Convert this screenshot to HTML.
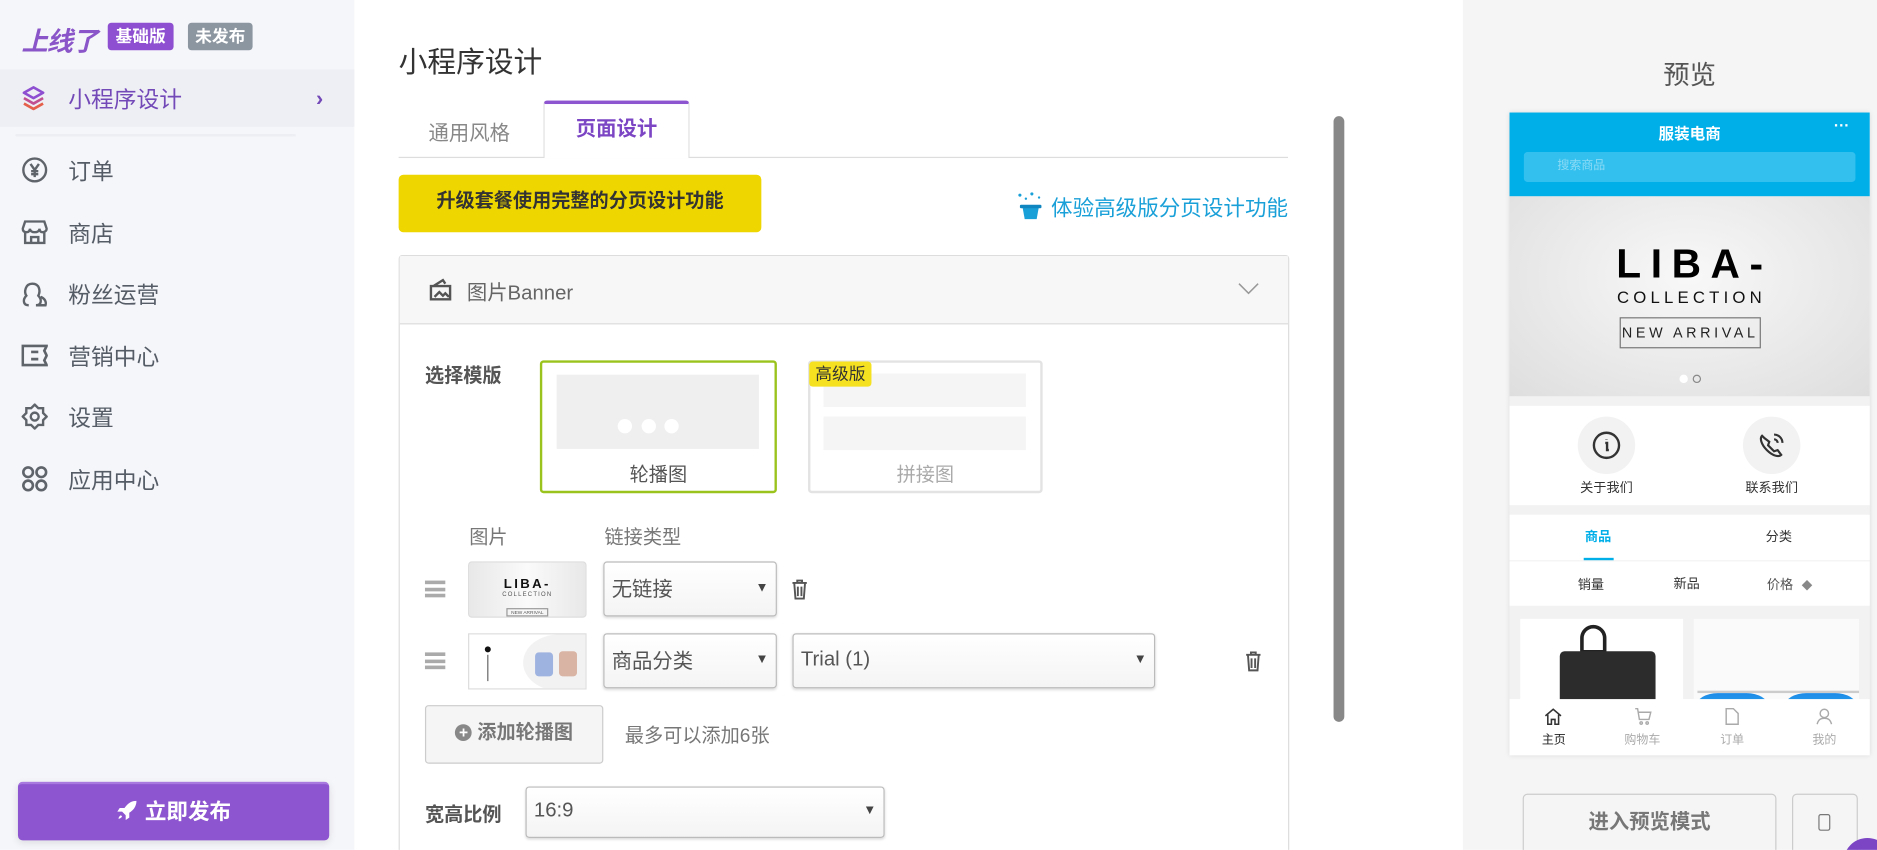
<!DOCTYPE html>
<html><head><meta charset="utf-8"><style>
*{box-sizing:border-box;margin:0;padding:0}
html,body{width:1877px;height:850px;overflow:hidden;background:#fff}
body{font-family:"Liberation Sans","Noto Sans CJK SC",sans-serif}
#w{position:absolute;left:0;top:0;width:1568px;height:710px;transform:scale(1.19707);transform-origin:0 0;overflow:hidden}
.a{position:absolute}
.side{left:0;top:0;width:296px;height:710px;background:#f5f6fa}
.item{position:absolute;left:0;width:296px;height:40px;display:flex;align-items:center;font-size:19px;color:#555c66}
.item svg{position:absolute;left:18px}
.item span{position:absolute;left:57px}
.sel{position:absolute;height:46px;border:1px solid #bbb;border-radius:3px;background:linear-gradient(#fff,#f4f4f4);box-shadow:0 1px 2px rgba(0,0,0,.15);font-size:17px;color:#555;padding-left:6px;display:flex;align-items:center;padding-bottom:3px}
.sel:after{content:"▼";position:absolute;right:6px;font-size:11px;color:#444}
.c{text-align:center}
</style></head><body><div id="w">

<div class="a side">
 <div class="a" style="left:18px;top:17px;font-size:22px;font-weight:bold;font-style:italic;color:#8a55c8;letter-spacing:-1px">上线了</div>
 <div class="a c" style="left:90px;top:19px;width:55px;height:23px;background:#8e4fd0;color:#fff;border-radius:3px;font-size:14px;font-weight:bold;line-height:23px">基础版</div>
 <div class="a c" style="left:157px;top:19px;width:54px;height:23px;background:#8c96a0;color:#fff;border-radius:3px;font-size:14px;font-weight:bold;line-height:23px">未发布</div>
 <div class="a" style="left:0;top:58px;width:296px;height:48px;background:#eeeff5"></div>
 <div class="item" style="top:62px;color:#7349b8">
  <svg width="20" height="22" viewBox="0 0 20 22" fill="none" stroke-width="2.2" stroke-linejoin="round"><path d="M10 2L18 6.5 10 11 2 6.5Z" stroke="#8e4fd0"/><path d="M2 11l8 4.5 8-4.5" stroke="#c05090"/><path d="M2 15.5l8 4.5 8-4.5" stroke="#e5604a"/></svg>
  <span>小程序设计</span><b style="position:absolute;left:264px;font-size:18px;color:#7349b8">›</b></div>
 <div class="a" style="left:13px;top:112px;width:234px;height:2px;background:#eceef3"></div>
 <div class="item" style="top:122px"><svg width="22" height="22" viewBox="0 0 22 22" fill="none" stroke="#5f646b" stroke-width="2"><circle cx="11" cy="11" r="9.5"/><path d="M7.5 6l3.5 5 3.5-5M11 11v6M8 12h6M8 14.5h6"/></svg><span>订单</span></div>
 <div class="item" style="top:174px"><svg width="22" height="20" viewBox="0 0 22 20" fill="none" stroke="#5f646b" stroke-width="2"><path d="M3 1h16l2 6c0 2-2 3-3.5 3S15 9 15 7c0 2-2 3-4 3S7 9 7 7c0 2-1 3-3 3S1 9 1 7zM3 10v9h16v-9M8 19v-5h6v5"/></svg><span>商店</span></div>
 <div class="item" style="top:225px"><svg width="22" height="22" viewBox="0 0 22 22" fill="none" stroke="#5f646b" stroke-width="2"><path d="M6 21c-5 0-5-5-2-8-2-3-1-10 5-10s7 6 5 10c3 3 3 8-2 8M12 21h8c1-3-1-6-4-7"/></svg><span>粉丝运营</span></div>
 <div class="item" style="top:277px"><svg width="22" height="20" viewBox="0 0 22 20" fill="none" stroke="#5f646b" stroke-width="2.2"><path d="M1 2h20l-2 4 2 4-2 4 2 4H1V2zM8 7h6M8 13h6"/></svg><span>营销中心</span></div>
 <div class="item" style="top:328px"><svg width="22" height="22" viewBox="0 0 22 22" fill="none" stroke="#5f646b" stroke-width="2"><path d="M11 1l3 3h4v4l3 3-3 3v4h-4l-3 3-3-3H4v-4l-3-3 3-3V4h4z"/><circle cx="11" cy="11" r="3.3"/></svg><span>设置</span></div>
 <div class="item" style="top:380px"><svg width="22" height="22" viewBox="0 0 22 22" fill="none" stroke="#5f646b" stroke-width="2.2"><circle cx="5.5" cy="5.5" r="4"/><circle cx="16.5" cy="5.5" r="4"/><circle cx="5.5" cy="16.5" r="4"/><circle cx="16.5" cy="16.5" r="4"/></svg><span>应用中心</span></div>
 <div class="a c" style="left:15px;top:653px;width:260px;height:49px;background:#8e55d0;border-radius:4px;border-top:2px solid #a87adf;color:#fff;font-size:18px;font-weight:bold;line-height:46px;box-shadow:0 2px 6px rgba(0,0,0,.1)"><svg width="18" height="18" viewBox="0 0 18 18" style="vertical-align:-2px;margin-right:6px"><path d="M17 1c-5 0-8 3-10 6H3L1 10h4l3 3v4l3-2v-4c3-2 6-5 6-10zM4 13c-2 1-2 3-2 3s2 0 3-2z" fill="#fff"/></svg>立即发布</div>
</div>

<div class="a" style="left:333px;top:32px;font-size:24px;color:#333">小程序设计</div>
<div class="a" style="left:333px;top:131px;width:743px;height:1px;background:#ddd"></div>
<div class="a" style="left:358px;top:97px;font-size:17px;color:#888">通用风格</div>
<div class="a c" style="left:454px;top:84px;width:122px;height:48px;background:#fff;border:1px solid #ddd;border-bottom:none;border-top:3px solid #8e55d0;border-radius:3px 3px 0 0;font-size:17px;font-weight:bold;color:#7b45c4;line-height:42px">页面设计</div>
<div class="a c" style="left:333px;top:146px;width:303px;height:48px;background:#eed600;border-radius:4px;font-size:16px;font-weight:bold;color:#333;line-height:46px">升级套餐使用完整的分页设计功能</div>
<div class="a" style="left:800px;top:160px;width:276px;text-align:right;font-size:18px;color:#1aa0d8;white-space:nowrap"><svg width="26" height="24" viewBox="0 0 26 24" style="vertical-align:-4px;margin-right:4px"><path d="M6 12h14l-2 11H8z" fill="#1aa0d8"/><rect x="4" y="11" width="18" height="3" rx="1" fill="#0f86bf"/><circle cx="4" cy="3" r="1.3" fill="#1aa0d8"/><circle cx="9" cy="6" r="1" fill="#1aa0d8"/><circle cx="14" cy="2" r="1.3" fill="#1aa0d8"/><circle cx="20" cy="5" r="1" fill="#1aa0d8"/></svg>体验高级版分页设计功能</div>

<div class="a" style="left:333px;top:213px;width:744px;height:520px;border:1px solid #ddd;border-radius:3px"></div>
<div class="a" style="left:334px;top:214px;width:742px;height:57px;background:#f7f7f7;border-bottom:1px solid #ddd"></div>
<svg class="a" style="left:358px;top:232px" width="20" height="19" viewBox="0 0 20 19" fill="none" stroke="#555" stroke-width="2"><path d="M2 7h16v11H2zM4 7l8-5 2 3M5 16l4-4 3 3 2-2 3 3"/></svg>
<div class="a" style="left:390px;top:230px;font-size:17px;color:#666">图片Banner</div>
<svg class="a" style="left:1034px;top:236px" width="18" height="11" viewBox="0 0 18 11" fill="none" stroke="#999" stroke-width="1.3"><path d="M1 1l8 8 8-8"/></svg>

<div class="a" style="left:355px;top:300px;font-size:16px;font-weight:bold;color:#555">选择模版</div>
<div class="a" style="left:451px;top:301px;width:198px;height:111px;border:2px solid #9bc31e;border-radius:3px"></div>
<div class="a" style="left:465px;top:313px;width:169px;height:62px;background:#efefef"></div>
<div class="a" style="left:516px;top:350px;width:12px;height:12px;border-radius:50%;background:#fff"></div>
<div class="a" style="left:536px;top:350px;width:12px;height:12px;border-radius:50%;background:#fff"></div>
<div class="a" style="left:555px;top:350px;width:12px;height:12px;border-radius:50%;background:#fff"></div>
<div class="a c" style="left:451px;top:383px;width:198px;font-size:16px;color:#555">轮播图</div>
<div class="a" style="left:675px;top:301px;width:196px;height:111px;border:2px solid #e3e3e3;border-radius:3px"></div>
<div class="a" style="left:688px;top:312px;width:169px;height:28px;background:#f5f5f5"></div>
<div class="a" style="left:688px;top:348px;width:169px;height:28px;background:#f5f5f5"></div>
<div class="a c" style="left:676px;top:302px;width:52px;height:21px;background:#f5e11f;border-radius:3px;font-size:14px;color:#333;line-height:20px">高级版</div>
<div class="a c" style="left:675px;top:383px;width:196px;font-size:16px;color:#aaa">拼接图</div>

<div class="a" style="left:392px;top:435px;font-size:16px;color:#777">图片</div>
<div class="a" style="left:505px;top:435px;font-size:16px;color:#777">链接类型</div>

<div class="a" style="left:355px;top:485px;width:17px;height:14px;border-top:3px solid #aaa;border-bottom:3px solid #aaa"></div><div class="a" style="left:355px;top:490.5px;width:17px;height:3px;background:#aaa"></div>
<div class="a c" style="left:391px;top:469px;width:99px;height:47px;background:linear-gradient(90deg,#e8e8e8,#fafafa 50%,#e8e8e8);border:1px solid #ddd;border-radius:3px">
 <div style="font-size:11px;font-weight:bold;letter-spacing:2px;margin-top:13px;line-height:11px;color:#111">LIBA-</div><div style="font-size:5px;letter-spacing:1px;color:#555">COLLECTION</div><div style="display:inline-block;border:1px solid #999;font-size:4px;padding:0 3px;color:#555">NEW ARRIVAL</div></div>
<div class="sel" style="left:504px;top:469px;width:145px">无链接</div>
<svg class="a" style="left:661px;top:484px" width="14" height="17" viewBox="0 0 14 17" fill="none" stroke="#555" stroke-width="1.6"><path d="M1 3h12M5 3V1h4v2M2.5 3l1 13h7l1-13M5.5 6v8M8.5 6v8"/></svg>

<div class="a" style="left:355px;top:545px;width:17px;height:14px;border-top:3px solid #aaa;border-bottom:3px solid #aaa"></div><div class="a" style="left:355px;top:550.5px;width:17px;height:3px;background:#aaa"></div>
<div class="a" style="left:391px;top:529px;width:99px;height:47px;background:#fff;border:1px solid #ddd;overflow:hidden">
 <div class="a" style="left:13px;top:10px;width:5px;height:5px;border-radius:50%;background:#111"></div><div class="a" style="left:15px;top:17px;width:1px;height:22px;background:#666"></div>
 <div class="a" style="left:45px;top:0;width:60px;height:47px;border-radius:50% 0 0 50%;background:#f2f2f2"></div>
 <div class="a" style="left:55px;top:15px;width:15px;height:20px;background:#9fb3e0;border-radius:3px"></div>
 <div class="a" style="left:75px;top:14px;width:15px;height:21px;background:#d9b3a3;border-radius:3px"></div></div>
<div class="sel" style="left:504px;top:529px;width:145px">商品分类</div>
<div class="sel" style="left:662px;top:529px;width:303px;color:#555">Trial (1)</div>
<svg class="a" style="left:1040px;top:544px" width="14" height="17" viewBox="0 0 14 17" fill="none" stroke="#555" stroke-width="1.6"><path d="M1 3h12M5 3V1h4v2M2.5 3l1 13h7l1-13M5.5 6v8M8.5 6v8"/></svg>

<div class="a c" style="left:355px;top:589px;width:149px;height:49px;background:#f5f5f5;border:1px solid #ccc;border-radius:3px;font-size:16px;font-weight:bold;color:#777;line-height:45px"><span style="display:inline-block;width:14px;height:14px;border-radius:50%;background:#888;color:#fff;font-size:13px;line-height:14px;vertical-align:1px">+</span> 添加轮播图</div>
<div class="a" style="left:522px;top:601px;font-size:16px;color:#777">最多可以添加6张</div>

<div class="a" style="left:355px;top:667px;font-size:16px;font-weight:bold;color:#555">宽高比例</div>
<div class="sel" style="left:439px;top:657px;width:300px;height:43px">16:9</div>

<div class="a" style="left:1114px;top:97px;width:9px;height:506px;background:#888;border-radius:5px"></div>

<div class="a" style="left:1222px;top:0;width:346px;height:710px;background:#f5f5f5"></div>
<div class="a c" style="left:1261px;top:45px;width:301px;font-size:22px;color:#555">预览</div>
<div class="a" style="left:1261px;top:94px;width:301px;height:537px;background:#f2f2f2;box-shadow:0 0 4px rgba(0,0,0,.1);overflow:hidden">
 <div class="a" style="left:0;top:0;width:301px;height:70px;background:#00aee8"></div>
 <div class="a c" style="left:0;top:7px;width:301px;font-size:13px;font-weight:bold;color:#fff">服装电商</div>
 <div class="a" style="left:271px;top:3px;font-size:13px;color:#fff;font-weight:bold">···</div>
 <div class="a" style="left:12px;top:33px;width:277px;height:25px;background:#33c0ee;border-radius:3px;font-size:10px;color:#8bdaf5;line-height:23px;padding-left:28px">搜索商品</div>
 <div class="a" style="left:0;top:70px;width:301px;height:167px;background:radial-gradient(ellipse at 50% 40%,#f8f8f8,#dedede)"></div>
 <div class="a c" style="left:0;top:110px;width:301px;font-size:34px;font-weight:900;letter-spacing:8px;color:#000;line-height:34px;padding-left:8px">LIBA-</div>
 <div class="a c" style="left:0;top:146px;width:301px;font-size:14px;letter-spacing:3.5px;color:#111;padding-left:3px">COLLECTION</div>
 <div class="a c" style="left:92px;top:171px;width:118px;height:26px;border:1px solid #777;font-size:12px;letter-spacing:3px;line-height:24px;color:#222">NEW ARRIVAL</div>
 <div class="a" style="left:142px;top:219px;width:7px;height:7px;border-radius:50%;background:#fff"></div>
 <div class="a" style="left:153px;top:219px;width:7px;height:7px;border-radius:50%;border:1px solid #888"></div>
 <div class="a" style="left:0;top:245px;width:301px;height:83px;background:#fff"></div>
 <div class="a" style="left:57px;top:254px;width:48px;height:48px;border-radius:50%;background:#f2f2f2"></div>
 <svg class="a" style="left:69px;top:266px" width="24" height="24" viewBox="0 0 24 24" fill="none" stroke="#333" stroke-width="2"><circle cx="12" cy="12" r="10.5"/><path d="M11 10h1.5v6h1.5M12 7v.5"/></svg>
 <div class="a" style="left:195px;top:254px;width:48px;height:48px;border-radius:50%;background:#f2f2f2"></div>
 <svg class="a" style="left:207px;top:266px" width="24" height="24" viewBox="0 0 24 24" fill="none" stroke="#333" stroke-width="1.8"><path d="M4 4c-2 2-1 7 4 12s10 6 12 4l-3-4-3 1-5-5 1-3-4-3zM14 3a7 7 0 0 1 7 7M14 7a3 3 0 0 1 3 3"/></svg>
 <div class="a c" style="left:41px;top:305px;width:80px;font-size:11px;color:#333">关于我们</div>
 <div class="a c" style="left:179px;top:305px;width:80px;font-size:11px;color:#333">联系我们</div>
 <div class="a" style="left:0;top:336px;width:301px;height:38px;background:#fff"></div>
 <div class="a c" style="left:54px;top:346px;width:40px;font-size:11px;font-weight:bold;color:#00aee8">商品</div>
 <div class="a" style="left:62px;top:372px;width:25px;height:2px;background:#00aee8"></div>
 <div class="a c" style="left:205px;top:346px;width:40px;font-size:11px;color:#333">分类</div>
 <div class="a" style="left:0;top:375px;width:301px;height:37px;background:#fff"></div>
 <div class="a" style="left:57px;top:386px;font-size:11px;color:#333">销量</div>
 <div class="a" style="left:137px;top:385px;font-size:11px;color:#333">新品</div>
 <div class="a" style="left:215px;top:386px;font-size:11px;color:#555">价格 <span style="color:#888;font-size:9px;margin-left:4px">◆</span></div>
 <div class="a" style="left:9px;top:423px;width:136px;height:80px;background:#fff;overflow:hidden">
  <div class="a" style="left:50px;top:5px;width:22px;height:24px;border:3px solid #222;border-radius:11px 11px 0 0"></div>
  <div class="a" style="left:33px;top:27px;width:80px;height:60px;background:#2c2c2c;border-radius:4px"></div></div>
 <div class="a" style="left:154px;top:423px;width:138px;height:80px;background:#fafafa;overflow:hidden">
  <div class="a" style="left:3px;top:60px;width:136px;height:2px;background:#ccc"></div>
  <div class="a" style="left:2px;top:62px;width:60px;height:36px;border-radius:30% 30% 50% 50%;background:linear-gradient(#1d8be8,#3fd0f5)"></div>
  <div class="a" style="left:76px;top:62px;width:60px;height:36px;border-radius:30% 30% 50% 50%;background:linear-gradient(#1d8be8,#3fd0f5)"></div></div>
 <div class="a" style="left:0;top:490px;width:301px;height:47px;background:#fff"></div>
 <svg class="a" style="left:29px;top:497px" width="15" height="15" viewBox="0 0 15 15" fill="none" stroke="#333" stroke-width="1.3"><path d="M1 7l6.5-5.5L14 7M3 6v8h3v-4h3v4h3V6"/></svg>
 <svg class="a" style="left:104px;top:497px" width="15" height="15" viewBox="0 0 15 15" fill="none" stroke="#aaa" stroke-width="1.2"><path d="M1 1h2l1.5 9h8l1.5-6H4"/><circle cx="6" cy="13" r="1"/><circle cx="11" cy="13" r="1"/></svg>
 <svg class="a" style="left:179px;top:497px" width="14" height="15" viewBox="0 0 14 15" fill="none" stroke="#aaa" stroke-width="1.2"><path d="M2 1h6l4 4v9H2z"/></svg>
 <svg class="a" style="left:256px;top:497px" width="14" height="15" viewBox="0 0 14 15" fill="none" stroke="#aaa" stroke-width="1.2"><circle cx="7" cy="5" r="3.5"/><path d="M1 14c1-4 3-5 6-5s5 1 6 5"/></svg>
 <div class="a c" style="left:12px;top:515px;width:50px;font-size:10px;color:#222">主页</div>
 <div class="a c" style="left:86px;top:515px;width:50px;font-size:10px;color:#aaa">购物车</div>
 <div class="a c" style="left:161px;top:515px;width:50px;font-size:10px;color:#aaa">订单</div>
 <div class="a c" style="left:238px;top:515px;width:50px;font-size:10px;color:#aaa">我的</div>
</div>
<div class="a c" style="left:1272px;top:663px;width:212px;height:56px;background:#f5f5f5;border:1px solid #ccc;border-radius:4px;font-size:17px;font-weight:bold;color:#777;line-height:46px">进入预览模式</div>
<div class="a" style="left:1497px;top:663px;width:55px;height:56px;background:#f5f5f5;border:1px solid #ccc;border-radius:4px"></div>
<div class="a" style="left:1519px;top:680px;width:10px;height:14px;border:1.5px solid #777;border-radius:2px"></div>
<div class="a" style="left:1540px;top:700px;width:40px;height:40px;border-radius:50%;background:#7b45c4"></div>
</div></body></html>
